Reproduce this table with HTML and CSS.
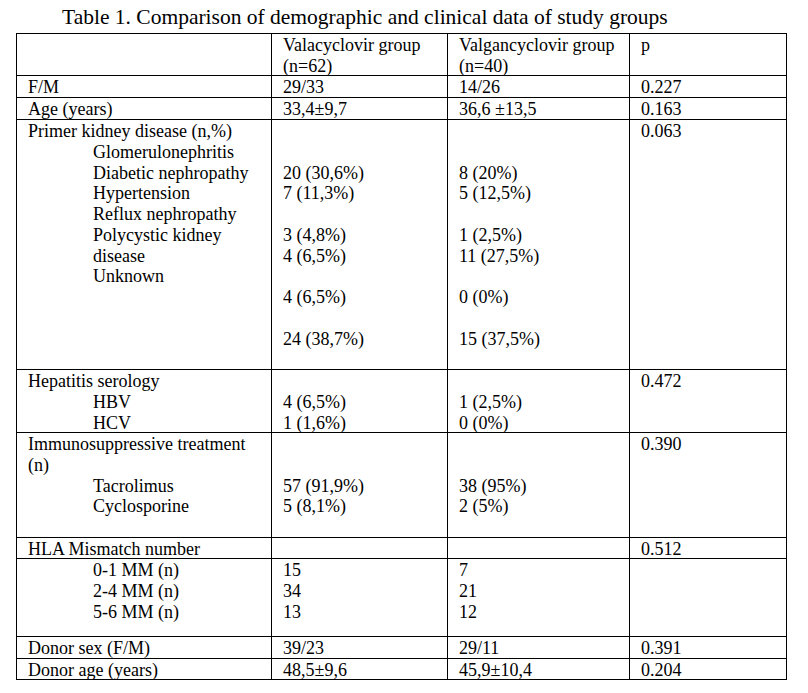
FILE: index.html
```html
<!DOCTYPE html>
<html>
<head>
<meta charset="utf-8">
<link rel="stylesheet" href="styles.css">
</head>
<body>
<div class="title">Table 1. Comparison of demographic and clinical data of study groups</div>
<div class="grid">
  <div class="c"></div>
  <div class="c">Valacyclovir group<br>(n=62)</div>
  <div class="c">Valgancyclovir group<br>(n=40)</div>
  <div class="c">p</div>

  <div class="c">F/M</div>
  <div class="c">29/33</div>
  <div class="c">14/26</div>
  <div class="c">0.227</div>

  <div class="c">Age (years)</div>
  <div class="c">33,4±9,7</div>
  <div class="c">36,6 ±13,5</div>
  <div class="c">0.163</div>

  <div class="c">Primer kidney disease (n,%)<div class="ind">Glomerulonephritis<br>Diabetic nephropathy<br>Hypertension<br>Reflux nephropathy<br>Polycystic kidney<br>disease<br>Unknown</div></div>
  <div class="c"><br><br>20 (30,6%)<br>7 (11,3%)<br><br>3 (4,8%)<br>4 (6,5%)<br><br>4 (6,5%)<br><br>24 (38,7%)</div>
  <div class="c"><br><br>8 (20%)<br>5 (12,5%)<br><br>1 (2,5%)<br>11 (27,5%)<br><br>0 (0%)<br><br>15 (37,5%)</div>
  <div class="c">0.063</div>

  <div class="c">Hepatitis serology<div class="ind">HBV<br>HCV</div></div>
  <div class="c"><br>4 (6,5%)<br>1 (1,6%)</div>
  <div class="c"><br>1 (2,5%)<br>0 (0%)</div>
  <div class="c">0.472</div>

  <div class="c">Immunosuppressive treatment<br>(n)<div class="ind">Tacrolimus<br>Cyclosporine</div></div>
  <div class="c"><br><br>57 (91,9%)<br>5 (8,1%)</div>
  <div class="c"><br><br>38 (95%)<br>2 (5%)</div>
  <div class="c">0.390</div>

  <div class="c">HLA Mismatch number</div>
  <div class="c"></div>
  <div class="c"></div>
  <div class="c">0.512</div>

  <div class="c"><div class="ind">0-1 MM (n)<br>2-4 MM (n)<br>5-6 MM (n)</div></div>
  <div class="c">15<br>34<br>13</div>
  <div class="c">7<br>21<br>12</div>
  <div class="c"></div>

  <div class="c">Donor sex (F/M)</div>
  <div class="c">39/23</div>
  <div class="c">29/11</div>
  <div class="c">0.391</div>

  <div class="c">Donor age (years)</div>
  <div class="c">48,5±9,6</div>
  <div class="c">45,9±10,4</div>
  <div class="c">0.204</div>
</div>
</body>
</html>
```
FILE: styles.css
```css
html, body {
  margin: 0;
  padding: 0;
  background: #fff;
  color: #000;
  font-family: "Liberation Serif", "Times New Roman", serif;
}

.title {
  font-size: 21.5px;
  height: 31px;
  line-height: 31px;
  padding-top: 2px;
  padding-left: 62px;
  white-space: nowrap;
}

.grid {
  margin-left: 16px;
  width: 771px;
  box-sizing: border-box;
  display: grid;
  grid-template-columns: 255px 176px 182px 157px;
  grid-template-rows: 42px 22px 22px 250px 63px 105px 21px 78px 22px 21px;
  border-left: 1px solid #000;
  border-top: 1px solid #000;
  font-size: 18px;
  line-height: 20.75px;
}

.c {
  border-right: 1px solid #000;
  border-bottom: 1px solid #000;
  padding: 1px 0 0 11px;
  white-space: nowrap;
  overflow: hidden;
}

.ind {
  padding-left: 65px;
}
```
